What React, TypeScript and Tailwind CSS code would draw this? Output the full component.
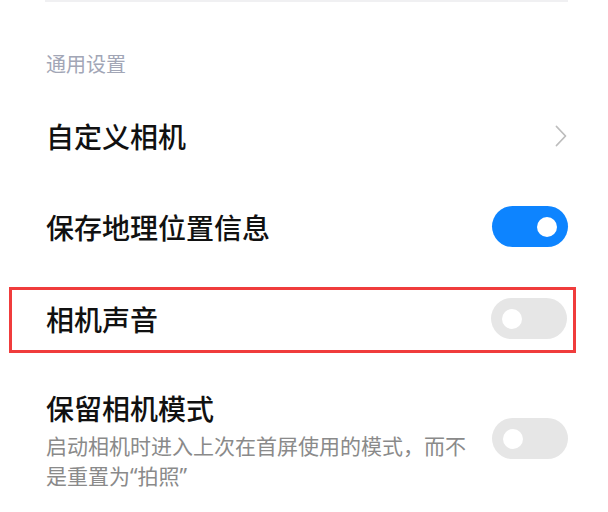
import React from "react";

const FONT = { fontFamily: '"Noto Sans CJK SC", "Noto Sans", sans-serif' };

function Toggle({ on }: { on: boolean }) {
    return (
        <div
            className={`flex h-[41px] w-[76px] shrink-0 items-center rounded-full px-[11px] ${
                on ? "justify-end bg-[#0d84ff]" : "justify-start bg-[#e6e6e6]"
            }`}
        >
            <div className="h-[20px] w-[20px] rounded-full bg-white" />
        </div>
    );
}

function Chevron() {
    return (
        <svg width="12" height="22" viewBox="0 0 12 22" fill="none" className="shrink-0">
            <path d="M1.5 1.5 L10.5 11 L1.5 20.5" stroke="#bdbdbd" strokeWidth="1.8" strokeLinecap="round" strokeLinejoin="round" />
        </svg>
    );
}

// latin quotes so they stay narrow like the system font does
const Quote = ({ children }: { children: React.ReactNode }) => (
    <span className="font-['Noto_Sans',sans-serif]">{children}</span>
);

export default function App() {
    return (
        <div className="h-[512px] w-[608px] overflow-hidden bg-white" style={FONT}>
            {/* divider from the previous group */}
            <div className="ml-[45px] mr-[40px] h-[2px] bg-[#f0f0f2]" />

            <div className="mt-[48px] pl-[46px] text-[20px] leading-[28px] text-[#a2a6b6]">通用设置</div>

            <div className="mt-[12px] flex h-[91px] items-center justify-between pl-[46px] pr-[41px]">
                <span className="text-[28px] font-medium leading-[36px] text-[#111]">自定义相机</span>
                <Chevron />
            </div>

            <div className="flex h-[91px] items-center justify-between pl-[46px] pr-[40px]">
                <span className="text-[28px] font-medium leading-[36px] text-[#111]">保存地理位置信息</span>
                <Toggle on />
            </div>

            <div className="pb-[10px] pl-[9px] pr-[32px] pt-[15px]">
                <div className="flex h-[66px] items-center justify-between border-[3px] border-[#f03c3c] pb-[3px] pl-[34px] pr-[6px]">
                    <span className="text-[28px] font-medium leading-[36px] text-[#111]">相机声音</span>
                    <Toggle on={false} />
                </div>
            </div>

            <div className="flex items-center justify-between pl-[46px] pr-[40px] pt-[27px]">
                <div className="flex flex-col gap-[4px]">
                    <span className="text-[28px] font-medium leading-[36px] text-[#111]">保留相机模式</span>
                    <p className="w-[430px] text-[21px] leading-[30px] text-[#8a8a8a]">
                        启动相机时进入上次在首屏使用的模式，而不是重置为<Quote>“</Quote>拍照<Quote>”</Quote>
                    </p>
                </div>
                <div className="mb-[4px]">
                    <Toggle on={false} />
                </div>
            </div>
        </div>
    );
}
